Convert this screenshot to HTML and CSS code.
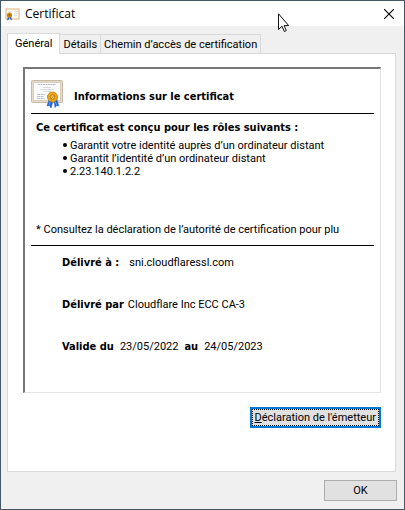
FILE: index.html
```html
<!DOCTYPE html>
<html lang="fr">
<head>
  <meta charset="UTF-8">
  <title>Certificat</title>
  <link rel="stylesheet" href="styles.css">
</head>
<body>
  <div class="window">
    <!-- Title bar -->
    <header class="titlebar">
      <svg class="title-icon" viewBox="0 0 16 14" aria-hidden="true">
        <rect x="1" y="2" width="13" height="10" fill="#fbf9f4" stroke="#e8c89c" stroke-width="1.4"/>
        <path d="M3 4.5h4M9 4.5h4M9 6.5h4M9 8.5h3" stroke="#dce3ec"/>
        <path d="M3 9l-1 4.5 2-1 1-3zM5 9l0 3 2 1.500-1-5z" fill="#2c68d4"/>
        <circle cx="4.500" cy="8" r="2.600" fill="#c98a10"/>
        <circle cx="4.500" cy="8" r="1" fill="#8f5f08"/>
      </svg>
      <h1 class="title">Certificat</h1>
      <button class="close" type="button" aria-label="Fermer">
        <svg width="10" height="10" viewBox="0 0 10 10"><path d="M0 0l10 10M10 0L0 10" stroke="#000" stroke-width="1.100"/></svg>
      </button>
    </header>

    <!-- Tabs -->
    <nav class="tabs" role="tablist">
      <button class="tab active" type="button" role="tab" aria-selected="true">Général</button>
      <button class="tab" type="button" role="tab" aria-selected="false">Détails</button>
      <button class="tab" type="button" role="tab" aria-selected="false">Chemin d’accès de certification</button>
    </nav>

    <main class="panel">
      <section class="sheet">
        <div class="sheet-head">
          <svg class="cert-icon" viewBox="0 0 32 28" aria-hidden="true">
            <rect x=".5" y=".5" width="31" height="22" rx="1" fill="#d9cdbb" stroke="#c9b9a2"/>
            <rect x="1.500" y="1.500" width="29" height="20" fill="none" stroke="#efe8dd" stroke-dasharray="1 1"/>
            <rect x="3" y="3" width="26" height="17" fill="#fcfcfb"/>
            <path d="M7 4.500h18" stroke="#b4bccd" stroke-dasharray="2 .5"/>
            <path d="M12 7.500h8M9 9.500h14M12 11.500h8" stroke="#cbd0dc" stroke-width=".8"/>
            <path d="M6 14.500h8M6 16.500h7M6 18.500h8" stroke="#bcc1cf" stroke-dasharray="3 .6"/>
            <path d="M18 20l-2 6 2.500-.5 1.500 2.500 2-7zM23 20l1 7.500 1.500-2 2.200.5-2-7z" fill="#1f62d8" stroke="#1f62d8" stroke-width=".6"/>
            <path d="M19 22l-1 3M24.500 22l1 3" stroke="#6fa5f5"/>
            <circle cx="21.500" cy="17" r="5" fill="#eba91a" stroke="#c98a14"/>
            <circle cx="21.500" cy="17" r="2.300" fill="#f8cf5a" stroke="#b97a0a"/>
            <path d="M20 19l3-3.500" stroke="#a96a08" stroke-width=".8"/>
          </svg>
          <h2>Informations sur le certificat</h2>
        </div>

        <div class="roles">
          <h3>Ce certificat est conçu pour les rôles suivants :</h3>
          <ul>
            <li>Garantit votre identité auprès d’un ordinateur distant</li>
            <li>Garantit l’identité d’un ordinateur distant</li>
            <li>2.23.140.1.2.2</li>
          </ul>
          <p class="note">* Consultez la déclaration de l’autorité de certification pour plu</p>
        </div>

        <dl class="details">
          <div class="row row-wide">
            <dt>Délivré à :</dt>
            <dd>sni.cloudflaressl.com</dd>
          </div>
          <div class="row">
            <dt>Délivré par</dt>
            <dd>Cloudflare Inc ECC CA-3</dd>
          </div>
          <div class="row row-dates">
            <dt>Valide du</dt>
            <dd>23/05/2022</dd>
            <dt>au</dt>
            <dd>24/05/2023</dd>
          </div>
        </dl>
      </section>

      <button class="btn btn-issuer" type="button"><span><u>D</u>éclaration de l'émetteur</span></button>
    </main>

    <footer class="footer">
      <button class="btn btn-ok" type="button">OK</button>
    </footer>

    <!-- Mouse pointer -->
    <svg class="pointer" width="13" height="20" viewBox="0 0 13 20" aria-hidden="true">
      <path d="M1.500.8v15.700l3.500-3.300 2.300 5.300 2-.9-2.200-5h4.600z" fill="#fff" stroke="#111"/>
    </svg>
  </div>
</body>
</html>
```

FILE: styles.css
```css
*, ::before, ::after {
  box-sizing: border-box;
  margin: 0;
  padding: 0;
}
body {
  font-family: Roboto, sans-serif;
  font-size: 11px;
  line-height: 13px;
  color: #000;
}
button {
  font: inherit;
  color: inherit;
}
.window {
  position: relative;
  display: flex;
  flex-direction: column;
  min-height: 100vh;
  border: 1px solid #45586a;
  background: #f0f0f0;
}

/* Title bar */
.titlebar {
  display: flex;
  align-items: center;
  height: 25px;
  padding: 0 10px 0 4px;
  background: #fff;
}
.title-icon {
  width: 16px;
  height: 14px;
}
.title {
  flex: 1;
  margin-left: 4px;
  font-family: "Open Sans", sans-serif;
  font-size: 12px;
  font-weight: 400;
}
.close {
  display: flex;
  border: 0;
  background: none;
}

/* Tabs */
.tabs {
  display: flex;
  align-items: flex-end;
  padding: 7px 6px 0;
}
.tab {
  height: 19px;
  padding: 0 3px;
  border: 1px solid #d9d9d9;
  border-bottom: 0;
  border-left: 0;
  background: #f0f0f0;
  white-space: nowrap;
}
.tab.active {
  z-index: 1;
  height: 21px;
  margin-bottom: -1px;
  padding: 0 7px 1px;
  border-left: 1px solid #d9d9d9;
  background: #fff;
}
.panel {
  flex: 1;
  margin: 0 8px 0 6px;
  padding: 13px 14px 0 15px;
  border: 1px solid #d9d9d9;
  background: #fff;
}

/* Certificate sheet */
.sheet {
  padding: 10px 6px 39px;
  border: 1px solid #e3e3e3;
  border-top: 2px solid #777;
  border-left: 2px solid #777;
}
.sheet-head {
  display: flex;
  align-items: center;
  height: 35px;
  border-bottom: 1px solid #000;
}
.cert-icon {
  width: 32px;
  height: 28px;
  margin-bottom: 4px;
}
h2, h3, dt {
  font-family: "DejaVu Sans Condensed", "DejaVu Sans", sans-serif;
  font-size: 11px;
  font-weight: 700;
}
h2 {
  margin-left: 11px;
}
.roles {
  padding: 7px 5px 9px;
  border-bottom: 1px solid #000;
}
ul {
  margin-top: 5px;
  padding-left: 25px;
  list-style: none;
}
li::before {
  content: "";
  display: inline-block;
  width: 4px;
  height: 4px;
  margin: 0 3px 2px 2px;
  border-radius: 50%;
  background: #000;
}
.note {
  margin-top: 45px;
  white-space: nowrap;
}
.details {
  display: flex;
  flex-direction: column;
  gap: 29px;
  padding: 10px 0 0 31px;
}
.row {
  display: flex;
  gap: 4px;
}
.row-wide {
  gap: 10px;
}
.row-dates {
  gap: 6px;
}

/* Buttons */
.btn {
  display: block;
  height: 21px;
  border: 1px solid #adadad;
  background: #e1e1e1;
}
.btn-issuer {
  margin: 14px 0 0 auto;
  border: 2px solid #0078d7;
}
.btn-issuer span {
  display: block;
  height: 17px;
  padding: 1px 2px;
  border: 1px dotted #000;
}
.footer {
  display: flex;
  justify-content: flex-end;
  padding: 8px 7px;
}
.btn-ok {
  width: 73px;
}
.pointer {
  position: absolute;
  top: 12px;
  left: 276px;
}
```
